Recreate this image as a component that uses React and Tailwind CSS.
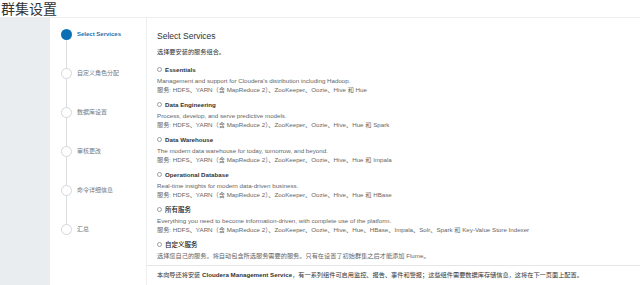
import React from 'react';

const steps = ['Select Services', '自定义角色分配', '数据库设置', '审核更改', '命令详细信息', '汇总'];

const services = [
  {
    name: 'Essentials',
    desc: "Management and support for Cloudera's distribution including Hadoop.",
    list: '服务: HDFS、YARN（含 MapReduce 2）、ZooKeeper、Oozie、Hive 和 Hue',
  },
  {
    name: 'Data Engineering',
    desc: 'Process, develop, and serve predictive models.',
    list: '服务: HDFS、YARN（含 MapReduce 2）、ZooKeeper、Oozie、Hive、Hue 和 Spark',
  },
  {
    name: 'Data Warehouse',
    desc: 'The modern data warehouse for today, tomorrow, and beyond.',
    list: '服务: HDFS、YARN（含 MapReduce 2）、ZooKeeper、Oozie、Hive、Hue 和 Impala',
  },
  {
    name: 'Operational Database',
    desc: 'Real-time insights for modern data-driven business.',
    list: '服务: HDFS、YARN（含 MapReduce 2）、ZooKeeper、Oozie、Hive、Hue 和 HBase',
  },
  {
    name: '所有服务',
    cjk: true,
    desc: 'Everything you need to become information-driven, with complete use of the platform.',
    list: '服务: HDFS、YARN（含 MapReduce 2）、ZooKeeper、Oozie、Hive、Hue、HBase、Impala、Solr、Spark 和 Key-Value Store Indexer',
  },
  {
    name: '自定义服务',
    cjk: true,
    desc: '选择您自己的服务。将自动包含所选服务需要的服务。只有在设置了初始群集之后才能添加 Flume。',
  },
];

function Radio() {
  return <span className="inline-block w-[5px] h-[5px] rounded-full border border-[#9aa0a6] bg-white mr-[3px]" />;
}

export default function App() {
  return (
    <div
      className="w-[640px] h-[285px] overflow-hidden bg-white text-[#555]"
      style={{ fontFamily: '"Liberation Sans", Arial, "Noto Sans CJK SC", sans-serif' }}
    >
      <div className="h-[18px] border-b border-[#eceef0] flex items-center">
        <h1 className="text-[14px] leading-[18px] text-[#333] pl-[1px]">群集设置</h1>
      </div>
      <div className="flex h-[267px]">
        <div className="w-[50px] bg-[#eaedf0]" />
        <div className="w-[97px] border-r border-[#eceef0] relative pt-[11px]">
          <div className="absolute left-[16px] top-[17px] h-[196px] w-px bg-[#dcdfe2]" />
          {steps.map((s, i) => (
            <div key={s} className="relative flex items-start h-[39px] pl-[11px]">
              <span
                className={
                  i === 0
                    ? 'w-[11px] h-[11px] rounded-full bg-[#0a6fb5] shrink-0'
                    : 'w-[11px] h-[11px] rounded-full bg-white border border-[#d4d7da] shrink-0'
                }
              />
              <span
                className={
                  i === 0
                    ? 'ml-[5px] text-[6px] leading-[11px] font-bold text-[#1f6fae]'
                    : 'ml-[5px] text-[6px] leading-[11px] text-[#777]'
                }
              >
                {s}
              </span>
            </div>
          ))}
        </div>
        <div className="flex-1 pt-[13px]">
          <div className="pl-[10px]">
            <h2 className="text-[8.5px] leading-[10px] text-[#333]">Select Services</h2>
            <p className="mt-[6px] text-[6.2px] leading-[9px] text-[#333]">选择要安装的服务组合。</p>
            <div className="mt-[9px] flex flex-col gap-[6px]">
              {services.map((s) => (
                <div key={s.name}>
                  <div
                    className={
                      s.cjk
                        ? 'flex items-center h-[9px] text-[6.5px] leading-[9px] font-medium text-[#222]'
                        : 'flex items-center h-[9px] text-[6.2px] leading-[9px] font-bold text-[#333]'
                    }
                  >
                    <Radio />
                    {s.name}
                  </div>
                  <div className="mt-[2px] h-[9px] text-[6.2px] leading-[9px] text-[#666] whitespace-nowrap">{s.desc}</div>
                  {s.list && <div className="h-[9px] text-[6.2px] leading-[9px] text-[#666] whitespace-nowrap">{s.list}</div>}
                </div>
              ))}
            </div>
          </div>
          <div className="mt-[5px] border-t border-[#e4e6e8] pt-[4px] pl-[10px] h-[14px] text-[6.2px] leading-[9px] text-[#333] whitespace-nowrap">
            本向导还将安装 <span className="font-bold">Cloudera Management Service</span>，有一系列组件可启用监控、报告、事件和警报；这些组件需要数据库存储信息，这将在下一页面上配置。
          </div>
        </div>
      </div>
    </div>
  );
}
